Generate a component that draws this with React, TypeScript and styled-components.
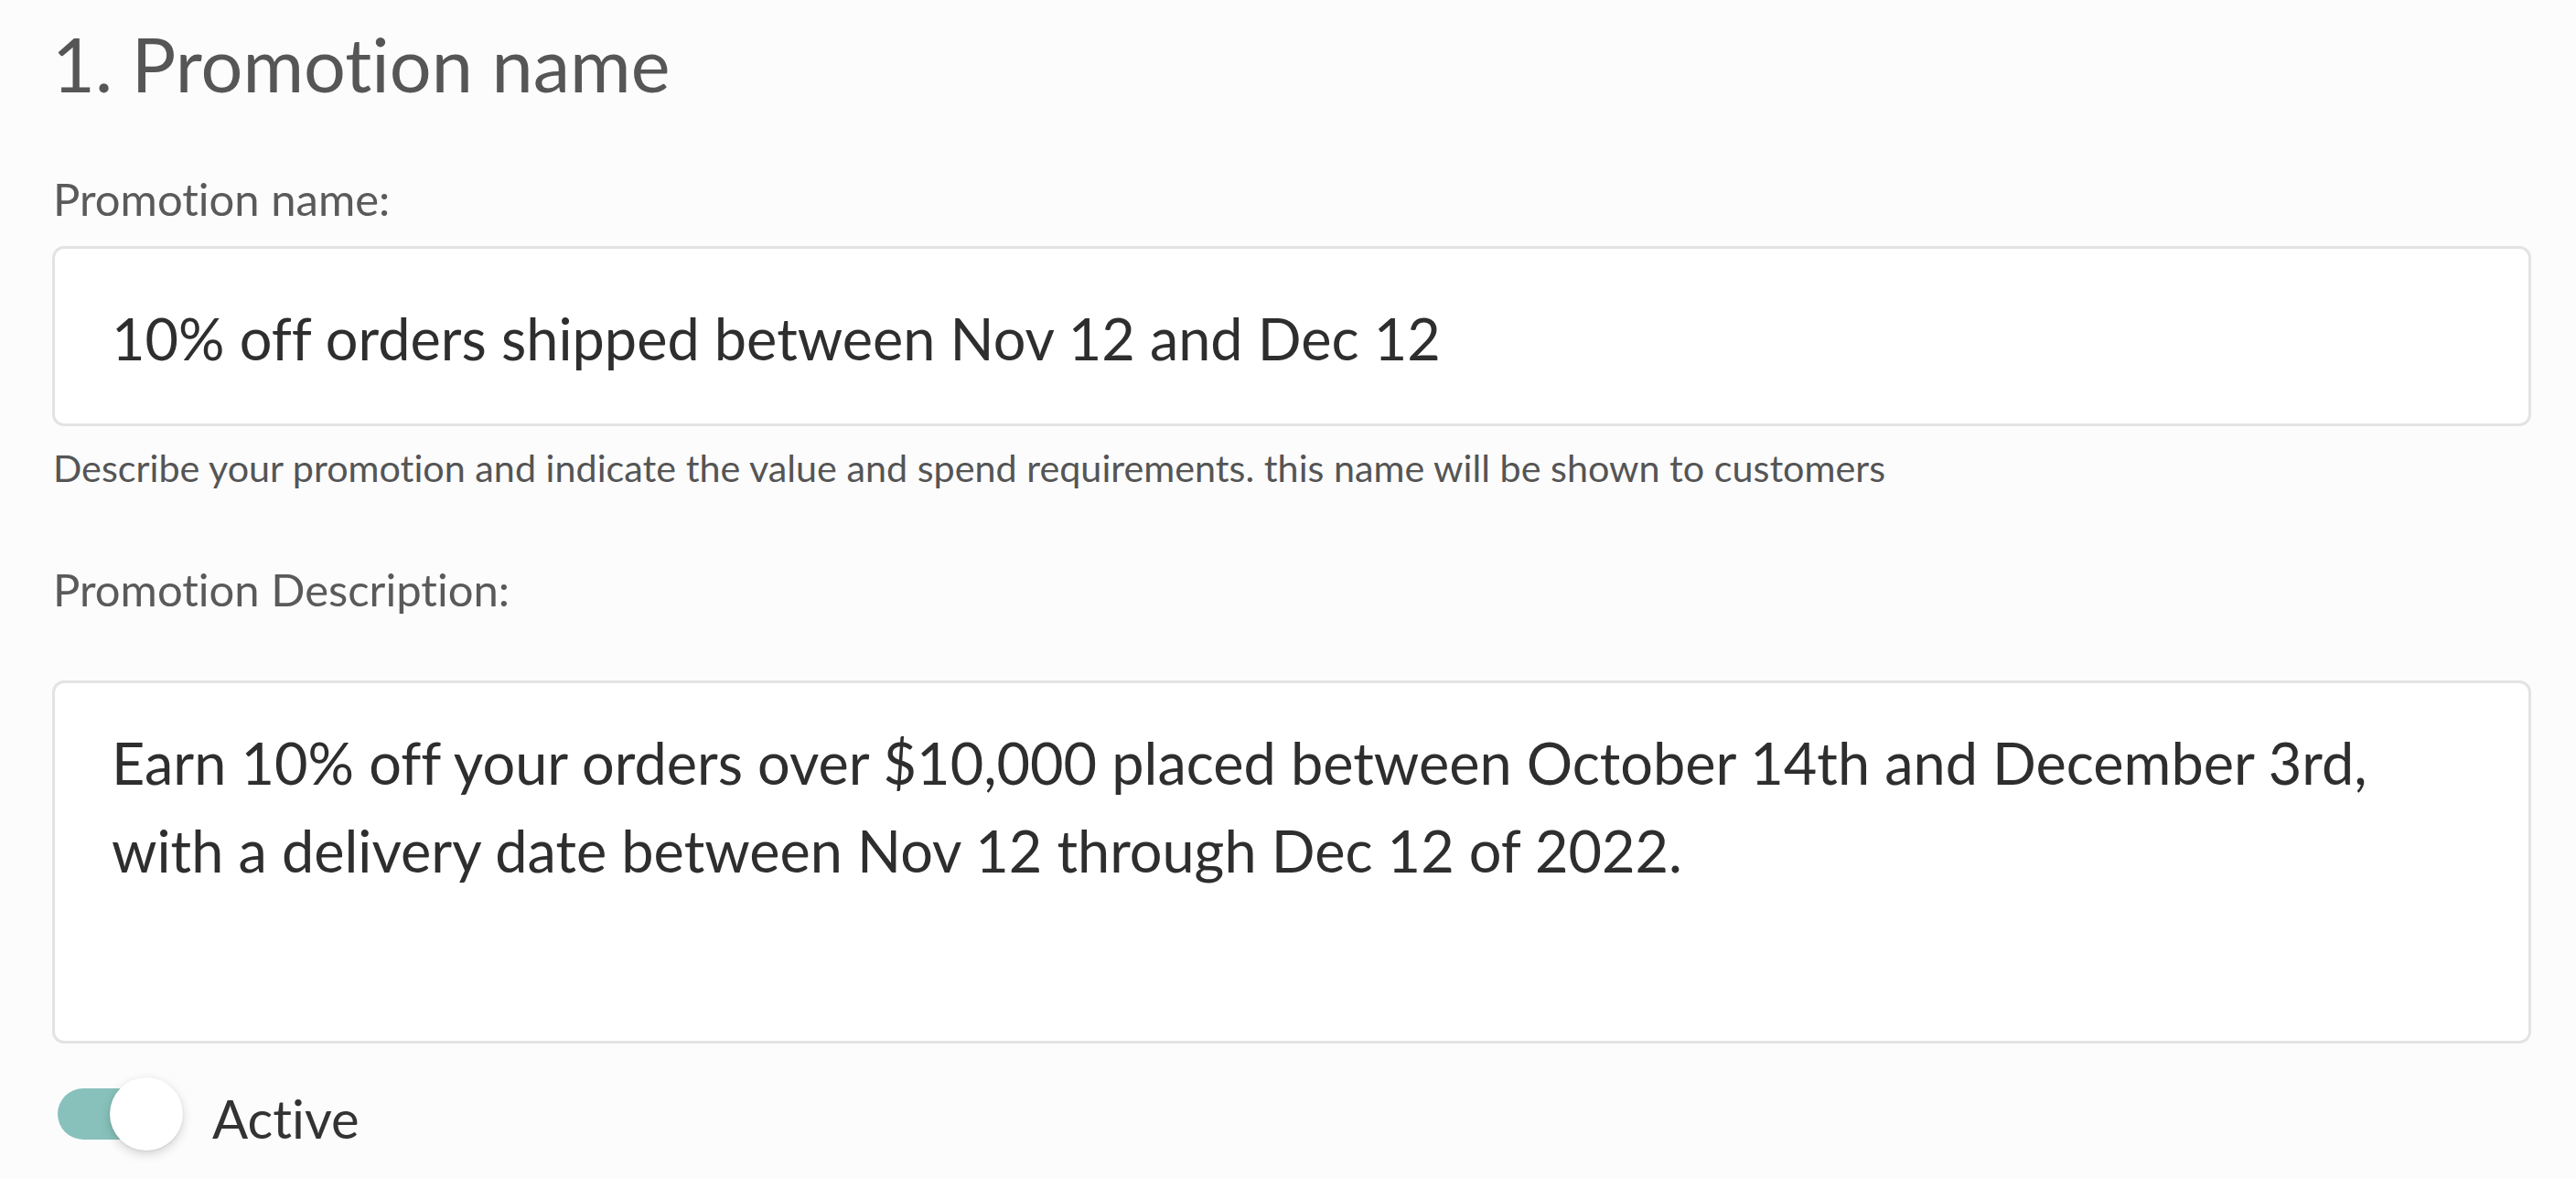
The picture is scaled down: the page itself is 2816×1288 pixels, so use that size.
import React from "react";
import styled, { createGlobalStyle } from "styled-components";

const GlobalStyle = createGlobalStyle`
  html, body {
    margin: 0;
    padding: 0;
    background: #fcfcfc;
  }
  body {
    font-family: Lato, "Open Sans", sans-serif;
    font-variant-ligatures: none;
  }
  input, textarea, button {
    font-variant-ligatures: none;
  }
`;

const Page = styled.main`
  box-sizing: border-box;
  width: 2816px;
  min-height: 1288px;
  padding: 22px 49px 0 57px;
  display: flex;
  flex-direction: column;
  font-family: Lato, sans-serif;
`;

const Heading = styled.h1`
  margin: 0;
  font-size: 81px;
  line-height: 96px;
  font-weight: 400;
  color: #565656;
`;

const Label = styled.label<{ $top: number; $bottom: number }>`
  display: block;
  margin: ${(p) => p.$top}px 0 ${(p) => p.$bottom}px 1px;
  font-size: 49px;
  line-height: 55px;
  color: #5a5a5a;
`;

const fieldBase = `
  box-sizing: border-box;
  width: 100%;
  border: 3px solid #e3e3e3;
  border-radius: 13px;
  background: #ffffff;
  font-family: Lato, sans-serif;
  font-size: 63px;
  color: #2e2e2e;
  outline: none;
  margin: 0;
`;

const TextInput = styled.input`
  ${fieldBase}
  display: block;
  height: 197px;
  padding: 4px 62px 0;
  line-height: 74px;
`;

const TextArea = styled.textarea`
  ${fieldBase}
  display: block;
  height: 397px;
  padding: 39px 140px 0 62px;
  line-height: 96px;
  resize: none;
  overflow: hidden;
`;

const Helper = styled.p`
  margin: 24px 0 0 1px;
  font-size: 41.3px;
  line-height: 43px;
  color: #555555;
`;

const ToggleRow = styled.div`
  display: flex;
  align-items: center;
  gap: 49px;
  margin-top: 37px;
  padding-left: 6px;
  height: 80px;
`;

const Track = styled.button<{ $on: boolean }>`
  flex: none;
  display: flex;
  align-items: center;
  justify-content: ${(p) => (p.$on ? "flex-end" : "flex-start")};
  width: 120px;
  height: 56px;
  padding: 0;
  border: none;
  border-radius: 28px;
  background: ${(p) => (p.$on ? "#88c1bb" : "#cfcfcf")};
  cursor: pointer;
`;

const Knob = styled.span`
  flex: none;
  width: 80px;
  height: 80px;
  margin-right: -17px;
  border-radius: 50%;
  background: #ffffff;
  box-shadow: 0 4px 12px rgba(0, 0, 0, 0.16), 0 1px 3px rgba(0, 0, 0, 0.08);
`;

const ToggleText = styled.span`
  font-size: 58px;
  line-height: 67px;
  color: #333333;
  padding-top: 8px;
`;

export default function App() {
  const [active, setActive] = React.useState(true);
  return (
    <>
      <GlobalStyle />
      <Page>
        <Heading>1. Promotion name</Heading>
        <Label htmlFor="promo-name" $top={72} $bottom={24}>
          Promotion name:
        </Label>
        <TextInput
          id="promo-name"
          readOnly
          defaultValue="10% off orders shipped between Nov 12 and Dec 12"
        />
        <Helper>
          Describe your promotion and indicate the value and spend requirements. this name will be shown to customers
        </Helper>
        <Label htmlFor="promo-desc" $top={84} $bottom={72}>
          Promotion Description:
        </Label>
        <TextArea
          id="promo-desc"
          readOnly
          defaultValue={
            "Earn 10% off your orders over $10,000 placed between October 14th and December 3rd, with a delivery date between Nov 12 through Dec 12 of 2022."
          }
        />
        <ToggleRow>
          <Track
            type="button"
            role="switch"
            aria-checked={active}
            $on={active}
            onClick={() => setActive((v) => !v)}
          >
            <Knob />
          </Track>
          <ToggleText>Active</ToggleText>
        </ToggleRow>
      </Page>
    </>
  );
}
